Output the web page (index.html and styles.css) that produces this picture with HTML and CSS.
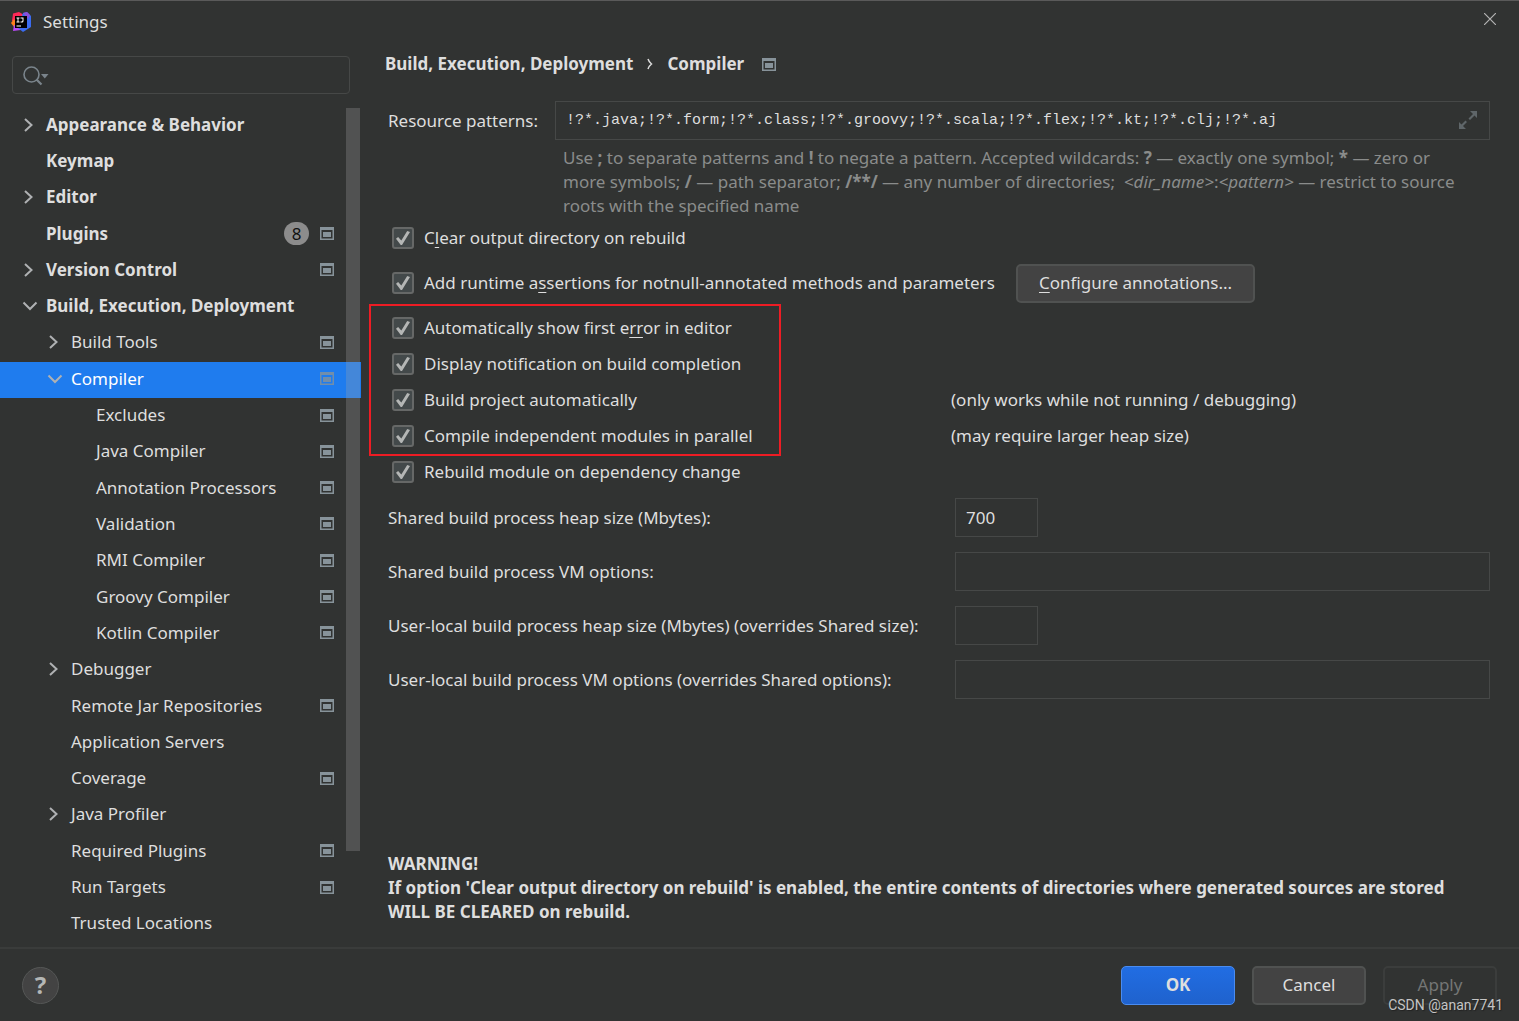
FILE: index.html
```html
<!DOCTYPE html>
<html lang="en">
<head>
    <meta charset="UTF-8">
    <meta name="viewport" content="width=device-width, initial-scale=1.0">
    <title>Settings</title>
    <link rel="stylesheet" href="styles.css">
</head>
<body>
    <!-- shared icons -->
    <svg class="defs" width="0" height="0">
        <symbol id="icon-right" viewBox="0 0 16 16">
            <path d="M3 2l6.500 6L3 14" fill="none" stroke="#afb1b3" stroke-width="2"/>
        </symbol>
        <symbol id="icon-down" viewBox="0 0 16 16">
            <path d="M1.500 4.500L8 11l6.500-6.500" fill="none" stroke="#afb1b3" stroke-width="2"/>
        </symbol>
        <symbol id="icon-project" viewBox="0 0 14 13">
            <path d="M0 0h14v13H0zM1.500 3v8.500h11V3z" fill="#87939a" fill-rule="evenodd"/>
            <path d="M3 5h8v5H3z" fill="#87939a"/>
        </symbol>
    </svg>

    <header class="titlebar">
        <svg class="logo" viewBox="0 0 20 20">
            <path d="M2 1.500L8 0l5 3-3 8-9-2z" fill="#fe2857"/>
            <path d="M0 11l3-4 3 5-3 3z" fill="#fc801d"/>
            <path d="M2 19l1-6 8 2-1 3z" fill="#b74af7"/>
            <path d="M12 1l4-1 4 4v11l-8 5-5-4z" fill="#3b6cf0"/>
            <path d="M12 1l4-1 3 3-2 4z" fill="#8a4fd8"/>
            <path d="M4 4h12v12H4z" fill="#000"/>
            <path d="M5.500 5.500h3v1h-1v3h1v1h-3v-1h1v-3h-1zM9.500 5.500h3v3.500q0 1.500-1.500 1.500h-1.500v-1h1q1 0 1-1v-2h-2zM5.500 13.500h4.500v1H5.500z" fill="#fff"/>
        </svg>
        <h1>Settings</h1>
        <button class="close" aria-label="Close">
            <svg viewBox="0 0 12 12" width="12" height="12"><path d="M0 0l12 12M12 0L0 12" stroke="#b4b4b4" stroke-width="1.200"/></svg>
        </button>
    </header>

    <div class="window">
        <aside class="sidebar">
            <div class="search">
                <svg viewBox="0 0 26 20" width="26" height="20">
                    <circle cx="8.500" cy="8.500" r="7.500" fill="none" stroke="#7a848b" stroke-width="1.600"/>
                    <path d="M13.500 13.500l5 5" stroke="#7a848b" stroke-width="2.200"/>
                    <path d="M18 8h7.500l-3.700 4.500z" fill="#7a848b"/>
                </svg>
                <input type="text" aria-label="Search settings">
            </div>
            <nav class="tree">
                <a href="#" class="top"><svg class="arrow"><use href="#icon-right"/></svg><span>Appearance &amp; Behavior</span></a>
                <a href="#" class="top"><span>Keymap</span></a>
                <a href="#" class="top"><svg class="arrow"><use href="#icon-right"/></svg><span>Editor</span></a>
                <a href="#" class="top"><span>Plugins</span><b class="badge">8</b><svg class="project"><use href="#icon-project"/></svg></a>
                <a href="#" class="top"><svg class="arrow"><use href="#icon-right"/></svg><span>Version Control</span><svg class="project"><use href="#icon-project"/></svg></a>
                <a href="#" class="top"><svg class="arrow"><use href="#icon-down"/></svg><span>Build, Execution, Deployment</span></a>
                <a href="#" class="sub"><svg class="arrow"><use href="#icon-right"/></svg><span>Build Tools</span><svg class="project"><use href="#icon-project"/></svg></a>
                <a href="#" class="sub selected"><svg class="arrow"><use href="#icon-down"/></svg><span>Compiler</span><svg class="project"><use href="#icon-project"/></svg></a>
                <a href="#" class="leaf"><span>Excludes</span><svg class="project"><use href="#icon-project"/></svg></a>
                <a href="#" class="leaf"><span>Java Compiler</span><svg class="project"><use href="#icon-project"/></svg></a>
                <a href="#" class="leaf"><span>Annotation Processors</span><svg class="project"><use href="#icon-project"/></svg></a>
                <a href="#" class="leaf"><span>Validation</span><svg class="project"><use href="#icon-project"/></svg></a>
                <a href="#" class="leaf"><span>RMI Compiler</span><svg class="project"><use href="#icon-project"/></svg></a>
                <a href="#" class="leaf"><span>Groovy Compiler</span><svg class="project"><use href="#icon-project"/></svg></a>
                <a href="#" class="leaf"><span>Kotlin Compiler</span><svg class="project"><use href="#icon-project"/></svg></a>
                <a href="#" class="sub"><svg class="arrow"><use href="#icon-right"/></svg><span>Debugger</span></a>
                <a href="#" class="sub"><span>Remote Jar Repositories</span><svg class="project"><use href="#icon-project"/></svg></a>
                <a href="#" class="sub"><span>Application Servers</span></a>
                <a href="#" class="sub"><span>Coverage</span><svg class="project"><use href="#icon-project"/></svg></a>
                <a href="#" class="sub"><svg class="arrow"><use href="#icon-right"/></svg><span>Java Profiler</span></a>
                <a href="#" class="sub"><span>Required Plugins</span><svg class="project"><use href="#icon-project"/></svg></a>
                <a href="#" class="sub"><span>Run Targets</span><svg class="project"><use href="#icon-project"/></svg></a>
                <a href="#" class="sub"><span>Trusted Locations</span></a>
                <div class="scrollbar"></div>
            </nav>
        </aside>

        <main class="content">
            <h2 class="breadcrumb">
                <span>Build, Execution, Deployment</span>
                <svg viewBox="0 0 6 12" width="6" height="12"><path d="M1 1q1 3 3.500 5Q2 8 1 11" fill="none" stroke="#dedede" stroke-width="1.500"/></svg>
                <span>Compiler</span>
                <svg class="project"><use href="#icon-project"/></svg>
            </h2>

            <div class="patterns">
                <label for="patterns">Resource patterns:</label>
                <div class="expand-field">
                    <input type="text" id="patterns" value="!?*.java;!?*.form;!?*.class;!?*.groovy;!?*.scala;!?*.flex;!?*.kt;!?*.clj;!?*.aj">
                    <svg viewBox="0 0 20 20" width="20" height="20">
                        <path d="M12 1h7v7l-2.500-2.500-4.500 4.500-1.500-1.500L15 4zM1 19v-7l2.500 2.500L7.500 10.500 9 12l-4 4 3 3z" fill="#5f6669"/>
                    </svg>
                </div>
                <p class="hint">Use <b>;</b> to separate patterns and <b>!</b> to negate a pattern. Accepted wildcards: <b>?</b> — exactly one symbol; <b>*</b> — zero or<br>more symbols; <b>/</b> — path separator; <b>/**/</b> — any number of directories; &nbsp;<i>&lt;dir_name&gt;</i>:<i>&lt;pattern&gt;</i> — restrict to source<br>roots with the specified name</p>
            </div>

            <div class="row">
                <label><input type="checkbox" checked><span>C<u>l</u>ear output directory on rebuild</span></label>
            </div>
            <div class="row row-button">
                <label><input type="checkbox" checked><span>Add runtime a<u>s</u>sertions for notnull-annotated methods and parameters</span></label>
                <button class="btn"><span><u>C</u>onfigure annotations...</span></button>
            </div>
            <div class="marked">
                <div class="row">
                    <label><input type="checkbox" checked><span>Automatically show first e<u>rr</u>or in editor</span></label>
                </div>
                <div class="row">
                    <label><input type="checkbox" checked><span>Display notification on build completion</span></label>
                </div>
                <div class="row">
                    <label><input type="checkbox" checked><span>Build project automatically</span></label>
                    <span>(only works while not running / debugging)</span>
                </div>
                <div class="row">
                    <label><input type="checkbox" checked><span>Compile independent modules in parallel</span></label>
                    <span>(may require larger heap size)</span>
                </div>
            </div>
            <div class="row">
                <label><input type="checkbox" checked><span>Rebuild module on dependency change</span></label>
            </div>

            <div class="fields">
                <label for="heap">Shared build process heap size (Mbytes):</label>
                <input type="text" id="heap" class="short" value="700">
                <label for="vm">Shared build process VM options:</label>
                <input type="text" id="vm">
                <label for="user-heap">User-local build process heap size (Mbytes) (overrides Shared size):</label>
                <input type="text" id="user-heap" class="short">
                <label for="user-vm">User-local build process VM options (overrides Shared options):</label>
                <input type="text" id="user-vm">
            </div>

            <p class="warning">WARNING!<br>If option 'Clear output directory on rebuild' is enabled, the entire contents of directories where generated sources are stored<br>WILL BE CLEARED on rebuild.</p>
        </main>
    </div>

    <footer class="footer">
        <button class="help" aria-label="Help">?</button>
        <button class="btn primary">OK</button>
        <button class="btn">Cancel</button>
        <button class="btn" disabled>Apply</button>
        <span class="watermark">CSDN @anan7741</span>
    </footer>
</body>
</html>
```
FILE: styles.css
```css
* {
    margin: 0;
    padding: 0;
    box-sizing: border-box;
}

body {
    min-height: 100vh;
    display: flex;
    flex-direction: column;
    background-color: #313332;
    border-top: 1px solid #5a5a5a;
    color: #dedede;
    font-family: "Noto Sans", "Open Sans", sans-serif;
    font-size: 17px;
    line-height: 24px;
}

input, button {
    font: inherit;
    color: inherit;
}

u {
    text-underline-offset: 3px;
}

.defs {
    position: absolute;
}

/* title bar */
.titlebar {
    display: flex;
    align-items: center;
    height: 42px;
    padding: 0 22px 0 11px;
}

.titlebar h1 {
    flex: 1;
    font-size: 17px;
    font-weight: normal;
}

.logo {
    width: 20px;
    height: 20px;
    margin-right: 12px;
}

.close {
    display: flex;
    padding: 0 1px 6px;
    background: none;
    border: none;
}

.window {
    flex: 1;
    display: flex;
}

/* left side */
.sidebar {
    width: 361px;
    flex-shrink: 0;
    display: flex;
    flex-direction: column;
    padding: 13px 0 4px;
}

.search {
    position: relative;
    margin: 0 11px 14px 12px;
}

.search svg {
    position: absolute;
    left: 11px;
    top: 10px;
}

.search input {
    display: block;
    width: 100%;
    height: 38px;
    padding: 0 12px 0 44px;
    background: none;
    border: 1px solid #464847;
    border-radius: 4px;
}

.tree {
    flex: 1;
    position: relative;
    display: grid;
    grid-auto-rows: 1fr;
}

.tree a {
    display: flex;
    align-items: center;
    padding: 0 27px 3px 0;
    color: #dedede;
    text-decoration: none;
}

.tree a span {
    flex: 1;
}

.tree .top {
    padding-left: 46px;
    font-weight: bold;
}

.tree .sub {
    padding-left: 71px;
}

.tree .leaf {
    padding-left: 96px;
}

.tree .selected {
    background-color: #1f7cee;
    color: #fff;
}

.arrow {
    width: 16px;
    height: 16px;
    margin: 0 8px 0 -24px;
}

.project {
    width: 14px;
    height: 13px;
}

.selected .project {
    opacity: 0.8;
}

.badge {
    width: 25px;
    height: 23px;
    margin-right: 11px;
    border-radius: 12px;
    background-color: #8c8c8c;
    color: #111;
    font-weight: normal;
    line-height: 23px;
    text-align: center;
}

.scrollbar {
    position: absolute;
    top: 0;
    right: 1px;
    width: 14px;
    height: 89%;
    background-color: rgba(166, 166, 166, 0.28);
}

/* right side */
.content {
    flex: 1;
    display: flex;
    flex-direction: column;
    padding: 9px 29px 23px 27px;
}

.breadcrumb {
    display: flex;
    align-items: center;
    gap: 14px;
    margin-left: -3px;
    font-size: 17px;
}

.breadcrumb .project {
    margin-left: 4px;
}

.content input[type="text"] {
    width: 100%;
    height: 39px;
    padding: 0 10px;
    background: none;
    border: 1px solid #464847;
}

.patterns {
    display: grid;
    grid-template-columns: 167px 1fr;
    align-items: center;
    margin: 25px 0 2px;
}

.expand-field {
    position: relative;
    display: flex;
}

.content .expand-field input {
    padding-right: 44px;
    font-family: "Liberation Mono", monospace;
    font-size: 15px;
}

.expand-field svg {
    position: absolute;
    right: 12px;
    top: 9px;
}

.hint {
    grid-column: 2;
    padding: 6px 0 0 8px;
    color: #8a8c8b;
    white-space: nowrap;
}

.row {
    display: flex;
    align-items: center;
    height: 36px;
}

.row label {
    display: flex;
    align-items: center;
    width: 563px;
    padding-left: 4px;
}

.row-button {
    height: 54px;
}

.row-button label {
    width: 628px;
}

input[type="checkbox"] {
    appearance: none;
    display: flex;
    align-items: center;
    justify-content: center;
    width: 22px;
    height: 22px;
    margin-right: 10px;
    background-color: #43494a;
    border: 2px solid #666867;
    border-radius: 3px;
}

input[type="checkbox"]:checked::before {
    content: "";
    width: 14px;
    height: 14px;
    background-color: #b4b6b5;
    clip-path: polygon(0 55%, 15% 43%, 38% 68%, 80% 0, 100% 8%, 43% 100%, 34% 100%);
}

/* red frame around the options to turn on */
.marked {
    position: relative;
}

.marked::after {
    content: "";
    position: absolute;
    top: -6px;
    left: -19px;
    width: 408px;
    bottom: -2px;
    border: 2px solid #ed1c24;
    pointer-events: none;
}

.fields {
    display: grid;
    grid-template-columns: 567px 1fr;
    align-items: center;
    row-gap: 15px;
    margin-top: 8px;
}

.content input.short {
    width: 83px;
}

.warning {
    margin-top: auto;
    font-weight: bold;
}

.btn {
    min-width: 114px;
    height: 39px;
    padding: 0 21px;
    background-color: #434343;
    border: 2px solid #505251;
    border-radius: 5px;
}

.btn.primary {
    background: linear-gradient(#216de3, #1f62cd);
    border: 1px solid #4a8cf0;
    font-weight: bold;
}

.btn:disabled {
    background: none;
    border-color: #3b3d3c;
    color: #747675;
}

.footer {
    position: relative;
    display: flex;
    align-items: center;
    gap: 17px;
    height: 74px;
    padding: 0 22px;
    border-top: 2px solid #3a3c3b;
}

.help {
    width: 37px;
    height: 37px;
    margin-right: auto;
    background-color: #434343;
    border: 1px solid #555756;
    border-radius: 50%;
    color: #b4b6b5;
    font-size: 24px;
    font-weight: bold;
    line-height: 32px;
}

.watermark {
    position: absolute;
    right: 16px;
    bottom: 4px;
    color: #c4c4c4;
    font-family: Roboto, sans-serif;
    font-size: 14px;
    text-shadow: 1px 1px 1px #222;
}
```
